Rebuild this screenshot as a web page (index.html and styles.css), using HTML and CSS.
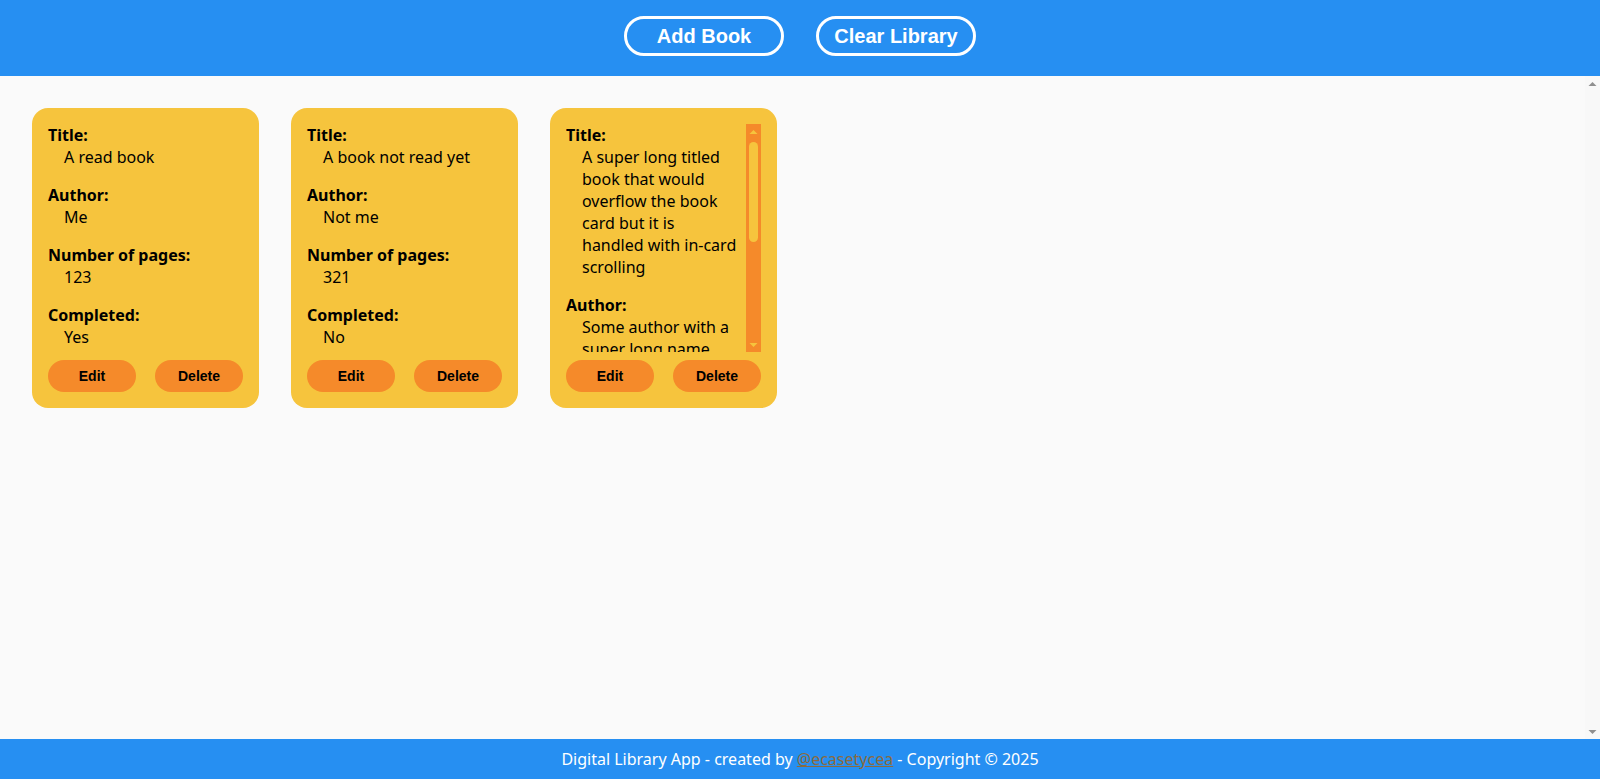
FILE: index.html
```html
<!DOCTYPE html>
<html lang="en">
<head>
<meta charset="utf-8">
<title>Digital Library</title>
<link rel="stylesheet" href="styles.css">
</head>
<body>
<header class="header">
  <button class="header-btn">Add Book</button>
  <button class="header-btn">Clear Library</button>
</header>
<main class="main">
  <div class="main-content">
    <div class="library">
      <div class="card">
        <div class="card-content">
          <div class="field"><p class="label">Title:</p><p class="value">A read book</p></div>
          <div class="field"><p class="label">Author:</p><p class="value">Me</p></div>
          <div class="field"><p class="label">Number of pages:</p><p class="value">123</p></div>
          <div class="field"><p class="label">Completed:</p><p class="value">Yes</p></div>
        </div>
        <div class="card-actions">
          <button class="card-btn">Edit</button>
          <button class="card-btn">Delete</button>
        </div>
      </div>
      <div class="card">
        <div class="card-content">
          <div class="field"><p class="label">Title:</p><p class="value">A book not read yet</p></div>
          <div class="field"><p class="label">Author:</p><p class="value">Not me</p></div>
          <div class="field"><p class="label">Number of pages:</p><p class="value">321</p></div>
          <div class="field"><p class="label">Completed:</p><p class="value">No</p></div>
        </div>
        <div class="card-actions">
          <button class="card-btn">Edit</button>
          <button class="card-btn">Delete</button>
        </div>
      </div>
      <div class="card">
        <div class="card-body">
          <div class="card-content card-content-clip">
            <div class="field"><p class="label">Title:</p><p class="value">A super long titled book that would overflow the book card but it is handled with in-card scrolling</p></div>
            <div class="field"><p class="label">Author:</p><p class="value">Some author with a super long name</p></div>
          </div>
          <div class="scrollbar card-scrollbar">
            <svg class="sb-arrow" width="15" height="15" viewBox="0 0 15 15"><polygon points="3.5,10 11.5,10 7.5,6" /></svg>
            <div class="sb-track"><div class="sb-thumb"></div></div>
            <svg class="sb-arrow" width="15" height="15" viewBox="0 0 15 15"><polygon points="3.5,6 11.5,6 7.5,10" /></svg>
          </div>
        </div>
        <div class="card-actions">
          <button class="card-btn">Edit</button>
          <button class="card-btn">Delete</button>
        </div>
      </div>
    </div>
  </div>
  <div class="scrollbar main-scrollbar">
    <svg class="sb-arrow" width="15" height="15" viewBox="0 0 15 15"><polygon points="3.5,10 11.5,10 7.5,6" /></svg>
    <div class="sb-track"></div>
    <svg class="sb-arrow" width="15" height="15" viewBox="0 0 15 15"><polygon points="3.5,6 11.5,6 7.5,10" /></svg>
  </div>
</main>
<footer class="footer">
  <p>Digital Library App - created by <a class="footer-link" href="#">@ecasetycea</a> - Copyright © 2025</p>
</footer>
</body>
</html>
```

FILE: styles.css
```css
* { box-sizing: border-box; }
html, body { height: 100%; }
body {
  margin: 0;
  display: flex;
  flex-direction: column;
  height: 100vh;
  background: #fafafa;
  font-family: "Noto Sans", "Open Sans", sans-serif;
  font-size: 16px;
  color: #000;
}
.header {
  flex: 0 0 76px;
  background: #268ff2;
  display: flex;
  justify-content: center;
  align-items: flex-start;
  gap: 32px;
  padding-top: 16px;
}
.header-btn {
  width: 160px;
  height: 40px;
  border: 3px solid #fff;
  border-radius: 20px;
  background: transparent;
  color: #fff;
  font-family: "Liberation Sans", Arial, sans-serif;
  font-weight: bold;
  font-size: 20px;
  padding: 0;
}
.main {
  flex: 1 1 auto;
  min-height: 0;
  display: flex;
}
.main-content {
  flex: 1 1 auto;
  min-width: 0;
  overflow: hidden;
  padding: 32px;
}
.scrollbar {
  flex: 0 0 15px;
  width: 15px;
  display: flex;
  flex-direction: column;
}
.sb-arrow { display: block; flex: 0 0 15px; }
.sb-track { flex: 1 1 auto; padding: 3px 3px 0; }
.main-scrollbar { background: #f8f8f8; }
.main-scrollbar .sb-arrow polygon { fill: #8f8f8f; }
.library {
  display: flex;
  flex-wrap: wrap;
  gap: 32px;
}
.card {
  width: 227px;
  height: 300px;
  background: #f6c43d;
  border-radius: 16px;
  padding: 16px;
  display: flex;
  flex-direction: column;
  gap: 8px;
}
.card-body {
  flex: 1 1 auto;
  min-height: 0;
  display: flex;
}
.card-content {
  flex: 1 1 auto;
  min-height: 0;
  min-width: 0;
}
.card-content-clip { overflow: hidden; padding-right: 8px; }
.card-scrollbar { background: #f58a2a; }
.card-scrollbar .sb-arrow polygon { fill: #f6c43d; }
.sb-thumb {
  height: 100px;
  border-radius: 5px;
  background: #f6c43d;
}
.field { margin-bottom: 16px; }
.field:last-child { margin-bottom: 0; }
.label {
  margin: 0;
  font-weight: bold;
}
.value {
  margin: 0;
  padding-left: 16px;
}
.card-actions {
  display: flex;
  justify-content: space-between;
}
.card-btn {
  width: 88px;
  height: 32px;
  border: none;
  border-radius: 16px;
  background: #f58a2a;
  color: #000;
  font-family: "Liberation Sans", Arial, sans-serif;
  font-weight: bold;
  font-size: 14px;
  padding: 0;
}
.footer {
  flex: 0 0 40px;
  background: #268ff2;
  color: #fff;
  display: flex;
  align-items: center;
  justify-content: center;
}
.footer p { margin: 0; }
.footer-link { color: #8b6b3e; }
```
